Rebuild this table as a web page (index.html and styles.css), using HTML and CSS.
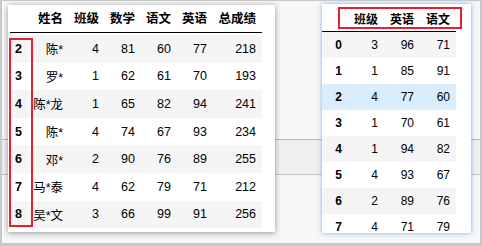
FILE: index.html
```html
<!DOCTYPE html>
<html lang="zh">
<head>
    <meta charset="UTF-8">
    <title>成绩表</title>
    <link rel="stylesheet" href="styles.css">
</head>
<body>
    <div class="desk">
        <!-- 左边：完整成绩表 -->
        <div class="card card-left">
            <table class="df df-big">
                <colgroup>
                    <col class="c-idx">
                    <col class="c-name">
                    <col class="c-num"><col class="c-num"><col class="c-num"><col class="c-num">
                    <col class="c-total">
                </colgroup>
                <thead>
                    <tr><th></th><th>姓名</th><th>班级</th><th>数学</th><th>语文</th><th>英语</th><th>总成绩</th></tr>
                </thead>
                <tbody>
                    <tr><th>2</th><td>陈*</td><td>4</td><td>81</td><td>60</td><td>77</td><td>218</td></tr>
                    <tr><th>3</th><td>罗*</td><td>1</td><td>62</td><td>61</td><td>70</td><td>193</td></tr>
                    <tr><th>4</th><td>陈*龙</td><td>1</td><td>65</td><td>82</td><td>94</td><td>241</td></tr>
                    <tr><th>5</th><td>陈*</td><td>4</td><td>74</td><td>67</td><td>93</td><td>234</td></tr>
                    <tr><th>6</th><td>邓*</td><td>2</td><td>90</td><td>76</td><td>89</td><td>255</td></tr>
                    <tr><th>7</th><td>马*泰</td><td>4</td><td>62</td><td>79</td><td>71</td><td>212</td></tr>
                    <tr><th>8</th><td>吴*文</td><td>3</td><td>66</td><td>99</td><td>91</td><td>256</td></tr>
                </tbody>
            </table>
            <div class="mark mark-index"></div>
        </div>

        <!-- 右边：挑出三列 -->
        <div class="card card-right">
            <table class="df df-small">
                <colgroup>
                    <col class="c-idx2">
                    <col class="c-num"><col class="c-num"><col class="c-num">
                </colgroup>
                <thead>
                    <tr><th></th><th>班级</th><th>英语</th><th>语文</th></tr>
                </thead>
                <tbody>
                    <tr><th>0</th><td>3</td><td>96</td><td>71</td></tr>
                    <tr><th>1</th><td>1</td><td>85</td><td>91</td></tr>
                    <tr class="hover"><th>2</th><td>4</td><td>77</td><td>60</td></tr>
                    <tr><th>3</th><td>1</td><td>70</td><td>61</td></tr>
                    <tr><th>4</th><td>1</td><td>94</td><td>82</td></tr>
                    <tr><th>5</th><td>4</td><td>93</td><td>67</td></tr>
                    <tr><th>6</th><td>2</td><td>89</td><td>76</td></tr>
                    <tr><th>7</th><td>4</td><td>71</td><td>79</td></tr>
                </tbody>
            </table>
            <div class="mark mark-head"></div>
        </div>
    </div>
</body>
</html>
```

FILE: styles.css
```css
body {
    margin: 0;
    font-family: "Liberation Sans", "Noto Sans CJK SC", sans-serif;
    color: #000;
}

.desk {
    position: relative;
    width: 482px;
    height: 246px;
    box-sizing: border-box;
    border-top: 1px solid #c8c8c8;
    border-left: 2px solid #c8c8c8;
    border-right: 2px solid #c8c8c8;
    border-bottom: 3px solid #c8c8c8;
    overflow: hidden;
    background:
        linear-gradient(#b9b9b9, #b9b9b9) 0 138px / 100% 1px no-repeat,
        linear-gradient(#c4c4c4, #c4c4c4) 0 173px / 100% 1px no-repeat,
        linear-gradient(#f0f0f0, #f0f0f0) 0 139px / 100% 34px no-repeat,
        #f7f7f7;
}

.card {
    position: absolute;
    background: #fff;
    overflow: hidden;
}

.card-left {
    left: 6px;
    top: 4px;
    width: 267px;
    height: 227px;
    box-shadow: 0 1px 6px rgba(0, 0, 0, 0.4);
}

.card-right {
    left: 320px;
    top: 3px;
    width: 149px;
    height: 229px;
    box-shadow: 0 0 5px rgba(80, 150, 235, 0.75);
}

/* pandas 风格的表格 */
.df {
    border-collapse: separate;
    border-spacing: 0;
    table-layout: fixed;
}

.df th, .df td {
    padding: 0 6px 0 0;
    text-align: right;
    white-space: nowrap;
    vertical-align: middle;
}

.df th {
    font-weight: bold;
}

.df thead th {
    vertical-align: bottom;
    border-bottom: 1px solid #000;
}

.df tbody tr:nth-child(odd) {
    background: #f5f5f5;
}

.df tbody tr.hover {
    background: #d9edfd;
}

.df-big {
    margin-left: 2px;
    font-size: 12.5px;
}

.df-big thead th {
    height: 28px;
    padding-bottom: 5px;
    box-sizing: border-box;
}

.df-big tbody tr:first-child > * {
    border-top: 2px solid #fff;
}

.df-big tbody th, .df-big tbody td {
    height: 27.6px;
}

.df-small {
    font-size: 12px;
}

.df-small thead th {
    height: 28px;
    padding-bottom: 4px;
    box-sizing: border-box;
}

.df-small tbody th, .df-small tbody td {
    height: 26px;
}

.c-idx { width: 18px; }
.c-name { width: 41px; }
.c-num { width: 36px; }
.c-total { width: 49px; }
.c-idx2 { width: 26px; }

/* 红框标注 */
.mark {
    position: absolute;
    border: 2px solid #e8202b;
    box-sizing: border-box;
}

.mark-index {
    left: 1px;
    top: 33px;
    width: 24px;
    height: 189px;
}

.mark-head {
    left: 16px;
    top: 3px;
    width: 124px;
    height: 22px;
}
```
